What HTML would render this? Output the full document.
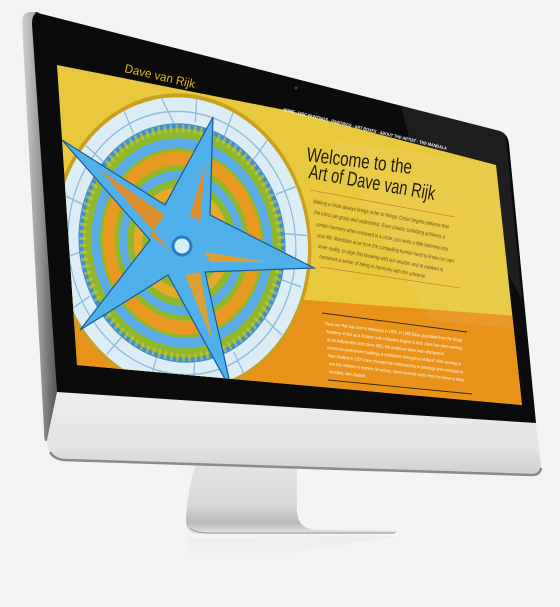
<!DOCTYPE html>
<html><head><meta charset="utf-8"><style>
html,body{margin:0;padding:0;background:#f3f3f3;}
svg{display:block;}
text{font-family:"Liberation Sans",sans-serif;}
</style></head><body>
<svg width="560" height="607" viewBox="0 0 560 607" xmlns="http://www.w3.org/2000/svg">
<defs>
<linearGradient id="chin" x1="0" y1="0" x2="0" y2="1">
<stop offset="0" stop-color="#eeeeee"/><stop offset="0.7" stop-color="#e2e2e2"/><stop offset="1" stop-color="#cfcfcf"/>
</linearGradient>
<linearGradient id="stand" x1="0" y1="0" x2="0" y2="1">
<stop offset="0" stop-color="#e4e4e4"/><stop offset="0.6" stop-color="#dadada"/><stop offset="0.85" stop-color="#b8b8b8"/><stop offset="1" stop-color="#e8e8e8"/>
</linearGradient>
<linearGradient id="side" x1="0" y1="0" x2="1" y2="0">
<stop offset="0" stop-color="#d0d0d0"/><stop offset="0.5" stop-color="#9a9a9a"/><stop offset="1" stop-color="#555"/>
</linearGradient>
<linearGradient id="refl" x1="0" y1="0" x2="0" y2="1">
<stop offset="0" stop-color="#e6e6e6"/><stop offset="1" stop-color="#f3f3f3"/>
</linearGradient>
<clipPath id="scr"><polygon points="57,65 290,111 496,165 522,405 77,365"/></clipPath>
</defs>

<!-- stand reflection -->
<polygon points="186,538 396,536 300,552 190,560" fill="url(#refl)" opacity="0.5"/>

<!-- stand -->
<path d="M197,460 L297,460 L297,512 Q298,528 315,530 L397,531 L395,534 L196,534 Q186,532 186,520 Q187,490 197,460 Z" fill="url(#stand)"/>
<path d="M190,528 Q195,533 210,533 L395,533" stroke="#999" stroke-width="1" fill="none"/>

<!-- chin -->
<path d="M47,395 L57,392 L536,423 L541,466 Q541,474 532,474 L62,459 Q50,457 47,445 Z" fill="url(#chin)"/>
<path d="M50,452 Q54,459 64,460 L532,475 Q540,475 541,468" stroke="#8a8a8a" stroke-width="2.5" fill="none"/>

<!-- left silver side -->
<path d="M22,22 Q22,12 32,12 L40,13 L57,392 L47,440 Q44,445 44,430 Z" fill="url(#side)"/>

<!-- black bezel -->
<path d="M34,12 L500,131 Q508,134 509,144 L536,423 L57,392 L32,24 Q32,12 40,12 Z" fill="#0b0b0b"/>
<polygon points="400,102 505,131 522,300 470,200 415,160" fill="#ffffff" opacity="0.08"/>
<circle cx="296" cy="88" r="1.6" fill="#3a3a55"/>

<!-- screen content -->
<g clip-path="url(#scr)">
<rect x="40" y="60" width="500" height="360" fill="#e8c83c"/>
<polygon points="40,280 530,317 530,420 40,420" fill="#e8921a"/>
<polygon points="330,140 530,170 530,330 430,320" fill="#ffffff" opacity="0.07"/>

<g transform="translate(182,243) rotate(-8) scale(0.86,1)">
<circle r="150" fill="#c9a020"/>
<circle r="146" fill="#dcedf6"/>
<g stroke="#7fb0d8" stroke-width="1.5" fill="none" opacity="0.8">
<circle r="132"/>
<path d="M0,-146 L10,-120 M40,-140 L35,-118 M80,-122 L66,-100 M115,-90 L95,-72 M140,-40 L116,-35 M145,10 L120,5 M130,60 L108,50 M100,105 L82,85 M50,138 L42,115 M-10,146 L-5,120 M-60,134 L-48,110 M-105,100 L-85,85 M-138,50 L-115,40 M-146,0 L-120,-5 M-130,-65 L-108,-52 M-95,-110 L-78,-92 M-45,-138 L-38,-115"/>
</g>
<circle r="120" fill="#3a8fd8"/>
<circle r="115" fill="#8db82c"/>
<circle r="115" fill="none" stroke="#d8c830" stroke-width="8" stroke-dasharray="3 4" opacity="0.6"/>
<circle r="100" fill="none" stroke="#5aaae8" stroke-width="10"/>
<circle r="92" fill="#e89a20"/>
<circle r="78" fill="#8db82c"/>
<circle r="68" fill="none" stroke="#5aaae8" stroke-width="9"/>
<circle r="56" fill="#e8a828"/>
<circle r="46" fill="#8db82c"/>
<circle r="34" fill="none" stroke="#5aaae8" stroke-width="8"/>
<circle r="22" fill="#8db82c"/>
<circle r="15" fill="#4aa0e0"/>
<circle r="10" fill="#d8eef8"/>
</g>
<polygon points="62,140 165,205 213,117 210,215 314,268 205,272 232,392 168,275 80,330 150,240" fill="#4fb0ec" stroke="#1a5a9a" stroke-width="1.2"/>
<polygon points="100,170 165,215 150,235 170,250" fill="#e88a18" opacity="0.9"/>
<polygon points="205,165 200,222 190,215" fill="#e88a18" opacity="0.9"/>
<polygon points="268,262 210,262 205,252" fill="#e8a020" opacity="0.9"/>
<polygon points="212,340 185,275 200,272" fill="#e8a020" opacity="0.9"/>
<circle cx="182" cy="246" r="9" fill="#d8eef8" stroke="#2a7ac8" stroke-width="3"/>

<line x1="310" y1="190" x2="455" y2="217" stroke="#c98a2a" stroke-width="0.8"/>
<line x1="320" y1="267" x2="460" y2="288" stroke="#c98a2a" stroke-width="0.8"/>
<text transform="translate(306,161) rotate(7)" font-size="20" fill="#231c0c" textLength="106" lengthAdjust="spacingAndGlyphs">Welcome to the</text>
<text transform="translate(308,178) rotate(10)" font-size="20" fill="#231c0c" textLength="128" lengthAdjust="spacingAndGlyphs">Art of Dave van Rijk</text>
<g font-size="5.6" fill="#6a5520">
<text transform="translate(313,203) rotate(10.7)" textLength="138" lengthAdjust="spacingAndGlyphs">Making a circle always brings order to things. Order begets patterns that</text>
<text transform="translate(314,214) rotate(10.7)" textLength="133" lengthAdjust="spacingAndGlyphs">the mind can grasp and understand. Even chaotic scribbling achieves a</text>
<text transform="translate(316,226) rotate(10.7)" textLength="134" lengthAdjust="spacingAndGlyphs">certain harmony when enclosed in a circle; you invite a little harmony into</text>
<text transform="translate(317,237) rotate(10.7)" textLength="139" lengthAdjust="spacingAndGlyphs">your life. Mandalas arise from the compelling human need to know our own</text>
<text transform="translate(318,248) rotate(10.7)" textLength="127" lengthAdjust="spacingAndGlyphs">inner reality, to align this knowing with our wisdom and to awaken in</text>
<text transform="translate(319,258) rotate(10.7)" textLength="109" lengthAdjust="spacingAndGlyphs">ourselves a sense of being in harmony with the universe.</text>
</g>
<line x1="322" y1="313" x2="467" y2="332" stroke="#3a2a10" stroke-width="0.9"/>
<line x1="328" y1="380" x2="472" y2="394" stroke="#3a2a10" stroke-width="0.9"/>
<g font-size="4.6" fill="#fff6e0">
<text transform="translate(325,325) rotate(7)" textLength="138" lengthAdjust="spacingAndGlyphs">Dave van Rijk was born in Indonesia in 1956. In 1980 Dave graduated from the Royal</text>
<text transform="translate(326,333) rotate(7)" textLength="137" lengthAdjust="spacingAndGlyphs">Academy of Arts as a Sculptor with a Masters Degree in Arts. Dave has been working</text>
<text transform="translate(327,341) rotate(7)" textLength="118" lengthAdjust="spacingAndGlyphs">as an independent artist since 1981. His sculptures have been displayed in</text>
<text transform="translate(327,349) rotate(7)" textLength="135" lengthAdjust="spacingAndGlyphs">numerous government buildings &amp; exhibitions throughout Holland. After arriving in</text>
<text transform="translate(328,357) rotate(7)" textLength="136" lengthAdjust="spacingAndGlyphs">New Zealand in 2007 Dave changed his craftsmanship to paintings and continues to</text>
<text transform="translate(329,365) rotate(7)" textLength="136" lengthAdjust="spacingAndGlyphs">use this medium to express his artistry. Dave currently works from his home in West</text>
<text transform="translate(329,373) rotate(7)" textLength="37" lengthAdjust="spacingAndGlyphs">Auckland, New Zealand.</text>
</g>
</g>

<text transform="translate(124,72) rotate(13)" font-size="12" fill="#dcb41c" textLength="72" lengthAdjust="spacingAndGlyphs">Dave van Rijk</text>
<text transform="translate(283,111) rotate(13.4)" font-size="4.6" fill="#eeeeee" font-weight="bold" textLength="168" lengthAdjust="spacingAndGlyphs">HOME  ·  DISC PAINTINGS  ·  PAINTINGS  ·  ART BOXES  ·  ABOUT THE ARTIST  ·  THE MANDALA</text>
</svg>
</body></html>
